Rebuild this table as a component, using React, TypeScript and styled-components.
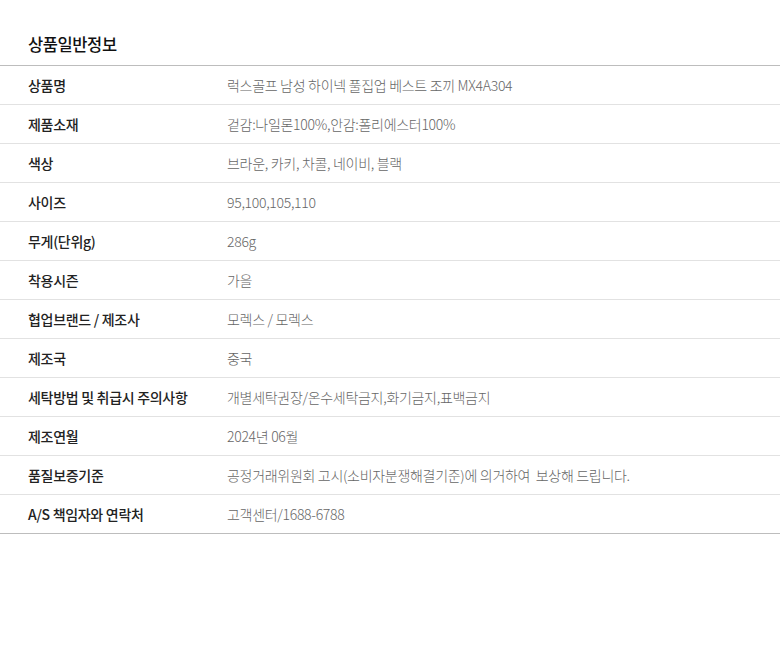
import React from "react";
import styled, { createGlobalStyle } from "styled-components";

interface InfoRow {
  label: string;
  value: string;
}

const rows: Array<InfoRow> = [
  { label: "상품명", value: "럭스골프 남성 하이넥 풀집업 베스트 조끼 MX4A304" },
  { label: "제품소재", value: "겉감:나일론100%,안감:폴리에스터100%" },
  { label: "색상", value: "브라운, 카키, 차콜, 네이비, 블랙" },
  { label: "사이즈", value: "95,100,105,110" },
  { label: "무게(단위g)", value: "286g" },
  { label: "착용시즌", value: "가을" },
  { label: "협업브랜드 / 제조사", value: "모렉스 / 모렉스" },
  { label: "제조국", value: "중국" },
  { label: "세탁방법 및 취급시 주의사항", value: "개별세탁권장/온수세탁금지,화기금지,표백금지" },
  { label: "제조연월", value: "2024년 06월" },
  {
    label: "품질보증기준",
    value: "공정거래위원회 고시(소비자분쟁해결기준)에 의거하여  보상해 드립니다.",
  },
  { label: "A/S 책임자와 연락처", value: "고객센터/1688-6788" },
];

function App() {
  return (
    <>
      <GlobalStyle />
      <Section>
        <Title>상품일반정보</Title>
        <Table>
          {rows.map((row) => (
            <Row key={row.label}>
              <Label>{row.label}</Label>
              <Value>{row.value}</Value>
            </Row>
          ))}
        </Table>
      </Section>
    </>
  );
}

const GlobalStyle = createGlobalStyle`
  body {
    margin: 0;
    background: #fff;
    font-family: "Noto Sans CJK KR", "Noto Sans", sans-serif;
  }
`;

const Section = styled.section`
  width: 780px;
  padding-top: 31px;
`;

const Title = styled.h2`
  margin: 0;
  padding: 0 28px;
  height: 34px;
  font-size: 16.5px;
  font-weight: 500;
  line-height: 26px;
  color: #111;
  letter-spacing: -0.4px;
`;

const Table = styled.div`
  border-top: 1px solid #bdbdbd;
  border-bottom: 1px solid #bdbdbd;
`;

const Row = styled.div`
  display: grid;
  grid-template-columns: 199px 1fr;
  align-items: center;
  height: 38px;
  padding-left: 28px;
  border-bottom: 1px solid #e2e2e2;
  font-size: 14px;
  letter-spacing: -0.3px;

  &:last-child {
    border-bottom: none;
  }
`;

const Label = styled.div`
  color: #222;
  font-weight: 500;
`;

const Value = styled.div`
  color: #666;
  font-weight: 300;
  white-space: pre;
`;

export default App;
